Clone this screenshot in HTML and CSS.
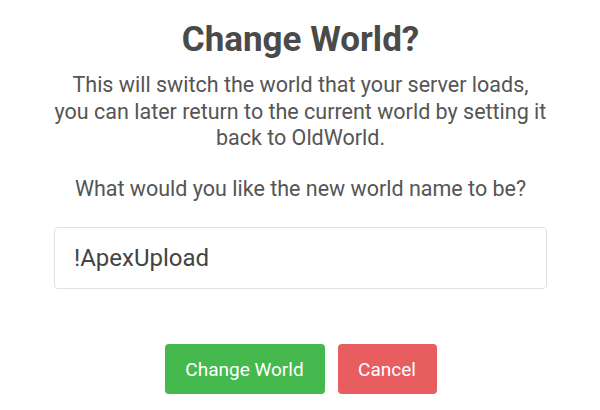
FILE: index.html
```html
<!DOCTYPE html>
<html>
<head>
<meta charset="utf-8">
<link rel="stylesheet" href="styles.css">
</head>
<body>
<div class="dialog">
  <h1 class="title">Change World?</h1>
  <p class="desc">This will switch the world that your server loads,<br>you can later return to the current world by setting it<br>back to OldWorld.</p>
  <p class="prompt">What would you like the new world name to be?</p>
  <div class="field">!ApexUpload</div>
  <div class="actions">
    <button class="btn btn-ok">Change World</button>
    <button class="btn btn-cancel">Cancel</button>
  </div>
</div>
</body>
</html>
```
FILE: styles.css
```css
html, body {
  margin: 0;
  padding: 0;
  background: #ffffff;
}
body {
  font-family: Roboto, "Liberation Sans", sans-serif;
  color: #555555;
}
.dialog {
  width: 600px;
  height: 410px;
  box-sizing: border-box;
  padding: 20px 53px 0 54px;
  text-align: center;
  display: flex;
  flex-direction: column;
}
.title {
  margin: 0;
  font-size: 35px;
  font-weight: 700;
  color: #4a4a4a;
  line-height: 40px;
}
.desc {
  margin: 12px 0 0;
  font-size: 21.5px;
  line-height: 26.5px;
}
.prompt {
  margin: 24px 0 0;
  font-size: 21.5px;
  line-height: 26.5px;
}
.field {
  margin-top: 25px;
  height: 62px;
  box-sizing: border-box;
  border: 1px solid #dfe1e5;
  border-radius: 4px;
  text-align: left;
  padding: 0 19px;
  display: flex;
  align-items: center;
  font-size: 24px;
  color: #444444;
}
.actions {
  margin-top: 55px;
  display: flex;
  justify-content: center;
  gap: 13px;
}
.btn {
  height: 50px;
  border: none;
  border-radius: 4px;
  color: #ffffff;
  font-family: Roboto, "Liberation Sans", sans-serif;
  font-size: 19px;
  padding: 0 20px;
  cursor: pointer;
}
.btn-ok {
  background: #46b94e;
  width: 160px;
}
.btn-cancel {
  background: #e85d5f;
  width: 99px;
}
```
